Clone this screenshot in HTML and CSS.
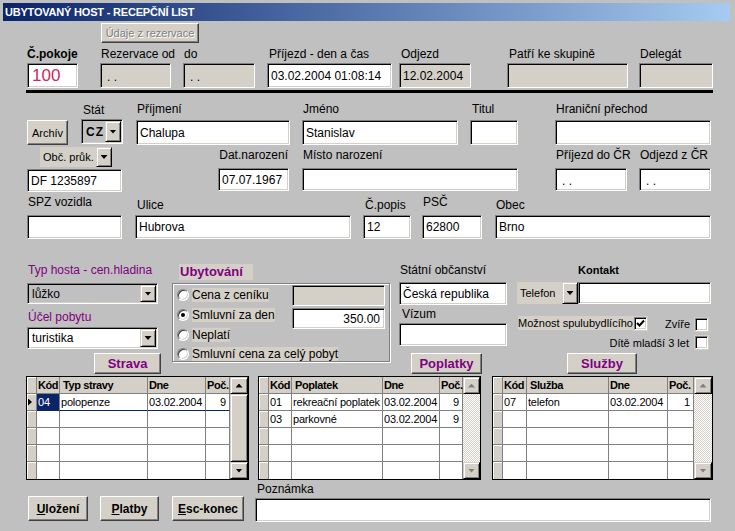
FILE: index.html
```html
<!DOCTYPE html>
<html lang="cs">
<head>
<meta charset="utf-8">
<title>Ubytovaný host - recepční list</title>
<link rel="stylesheet" href="styles.css">
</head>
<body>
<div class="win">
  <div class="titlebar">UBYTOVANÝ HOST - RECEPČNÍ LIST</div>
  <div class="form">
    <div class="row r0">
      <div class="btn btn-dis b-udaje">Údaje z rezervace</div>
    </div>

    <div class="row r1">
      <div class="fld f-pokoje"><div class="lbl lbl-b">Č.pokoje</div><div class="tb tb-room">100</div></div>
      <div class="fld f-rezod"><div class="lbl pl1">Rezervace od</div><div class="tb tb-dis tb-dots">. .</div></div>
      <div class="fld f-do"><div class="lbl pl1">do</div><div class="tb tb-dis tb-dots">. .</div></div>
      <div class="fld f-prijezd"><div class="lbl pl2">Příjezd - den a čas</div><div class="tb">03.02.2004 01:08:14</div></div>
      <div class="fld f-odjezd"><div class="lbl pl2">Odjezd</div><div class="tb tb-dis">12.02.2004</div></div>
      <div class="fld f-skup"><div class="lbl pl2">Patří ke skupině</div><div class="tb tb-dis"></div></div>
      <div class="fld f-deleg"><div class="lbl pl1">Delegát</div><div class="tb tb-dis"></div></div>
    </div>

    <div class="hline"></div>

    <div class="row r2">
      <div class="btn b-archiv">Archív</div>
      <div class="fld f-stat"><div class="lbl lbl-stat">Stát</div><div class="combo cb-cz"><span class="cb-txt">CZ</span><span class="dd"></span></div></div>
      <div class="fld f-prijmeni"><div class="lbl pl1">Příjmení</div><div class="tb">Chalupa</div></div>
      <div class="fld f-jmeno"><div class="lbl pl1">Jméno</div><div class="tb">Stanislav</div></div>
      <div class="fld f-titul"><div class="lbl pl2">Titul</div><div class="tb"></div></div>
      <div class="fld f-hranicni"><div class="lbl pl1">Hraniční přechod</div><div class="tb"></div></div>
    </div>

    <div class="row r3">
      <div class="fld f-obc">
        <div class="cmb-flat cf-obc"><span class="cf-txt">Obč. průk.</span><span class="dd"></span></div>
        <div class="tb tb-obc">DF 1235897</div>
      </div>
      <div class="fld f-datnar"><div class="lbl lbl-r">Dat.narození</div><div class="tb">07.07.1967</div></div>
      <div class="fld f-misto"><div class="lbl pl1">Místo narození</div><div class="tb"></div></div>
      <div class="fld f-prijcr"><div class="lbl pl1">Příjezd do ČR</div><div class="tb tb-dots">. .</div></div>
      <div class="fld f-odjcr"><div class="lbl pl1">Odjezd z ČR</div><div class="tb tb-dots">. .</div></div>
    </div>

    <div class="row r4">
      <div class="fld f-spz"><div class="lbl pl1">SPZ vozidla</div><div class="tb"></div></div>
      <div class="fld f-ulice"><div class="lbl pl2 lo">Ulice</div><div class="tb">Hubrova</div></div>
      <div class="fld f-popis"><div class="lbl pl2 lo">Č.popis</div><div class="tb">12</div></div>
      <div class="fld f-psc"><div class="lbl pl1">PSČ</div><div class="tb">62800</div></div>
      <div class="fld f-obec"><div class="lbl pl1 lo">Obec</div><div class="tb">Brno</div></div>
    </div>

    <div class="row r5">
      <div class="col c1">
        <div class="lbl lbl-p pl1">Typ hosta - cen.hladina</div>
        <div class="combo cb-luzko"><span class="cb-txt">lůžko</span><span class="dd"></span></div>
        <div class="lbl lbl-p lbl-ucel pl1">Účel pobytu</div>
        <div class="combo cb-tur"><span class="cb-txt">turistika</span><span class="dd"></span></div>
        <div class="btn btn-sec b-strava">Strava</div>
      </div>
      <div class="col c2">
        <div class="ubyt">Ubytování</div>
        <div class="frame">
          <div class="opt o1"><span class="radio"></span><span class="opt-l">Cena z ceníku</span></div>
          <div class="tb tb-dis fr-box"></div>
          <div class="opt"><span class="radio on"></span><span class="opt-l">Smluvní za den</span></div>
          <div class="tb fr-box num">350.00</div>
          <div class="opt span2"><span class="radio"></span><span class="opt-l">Neplatí</span></div>
          <div class="opt span2"><span class="radio"></span><span class="opt-l">Smluvní cena za celý pobyt</span></div>
        </div>
      </div>
      <div class="col c3">
        <div class="lbl pl1">Státní občanství</div>
        <div class="tb tb-obcan">Česká republika</div>
        <div class="lbl lbl-vizum">Vízum</div>
        <div class="tb tb-vizum"></div>
        <div class="btn btn-sec b-poplatky">Poplatky</div>
      </div>
      <div class="col c4">
        <div class="kontakt">Kontakt</div>
        <div class="tel-row">
          <span class="cf-txt cf-tel">Telefon</span><span class="dd"></span><div class="tb tb-tel"></div>
        </div>
        <div class="chk-row1">
          <span class="chk-lbl">Možnost spulubydlícího</span>
          <span class="chk chk-a"><svg width="9" height="9" viewBox="0 0 9 9"><polyline points="1,4 3.5,6.5 8,1.5" fill="none" stroke="#000" stroke-width="2"/></svg></span>
          <span class="chk-txt zvire">Zvíře</span>
          <span class="chk chk-b"></span>
        </div>
        <div class="chk-row2">
          <span class="chk-txt dite">Dítě mladší 3 let</span>
          <span class="chk"></span>
        </div>
        <div class="btn btn-sec b-sluzby">Služby</div>
      </div>
    </div>

    <div class="row r6">
      <div class="grid grid-strava">
        <div class="gt gt-strava">
          <div class="gh gs"></div><div class="gh">Kód</div><div class="gh gh3">Typ stravy</div><div class="gh">Dne</div><div class="gh">Poč.</div>
          <div class="gs cur"><span class="ptr"></span></div><div class="gc hl">04</div><div class="gc ul">polopenze</div><div class="gc ul">03.02.2004</div><div class="gc num ul">9</div>
          <div class="gs"></div><div class="gc"></div><div class="gc"></div><div class="gc"></div><div class="gc"></div>
          <div class="gs"></div><div class="gc"></div><div class="gc"></div><div class="gc"></div><div class="gc"></div>
          <div class="gs"></div><div class="gc"></div><div class="gc"></div><div class="gc"></div><div class="gc"></div>
          <div class="gs"></div><div class="gc"></div><div class="gc"></div><div class="gc"></div><div class="gc"></div>
        </div>
        <div class="sb sb-strava"><div class="sb-btn"><span class="tri-up"></span></div><div class="sb-thumb"></div><div class="sb-btn"><span class="tri-dn"></span></div></div>
      </div>

      <div class="grid grid-popl">
        <div class="gt gt-popl">
          <div class="gh gs"></div><div class="gh">Kód</div><div class="gh gh3">Poplatek</div><div class="gh">Dne</div><div class="gh">Poč.</div>
          <div class="gs"></div><div class="gc">01</div><div class="gc">rekreační poplatek</div><div class="gc">03.02.2004</div><div class="gc num">9</div>
          <div class="gs"></div><div class="gc">03</div><div class="gc">parkovné</div><div class="gc">03.02.2004</div><div class="gc num">9</div>
          <div class="gs"></div><div class="gc"></div><div class="gc"></div><div class="gc"></div><div class="gc"></div>
          <div class="gs"></div><div class="gc"></div><div class="gc"></div><div class="gc"></div><div class="gc"></div>
          <div class="gs"></div><div class="gc"></div><div class="gc"></div><div class="gc"></div><div class="gc"></div>
        </div>
        <div class="sb sb-dis sb-popl"><div class="sb-btn"><span class="tri-up"></span></div><div class="sb-track"></div><div class="sb-btn"><span class="tri-dn"></span></div></div>
      </div>

      <div class="grid grid-sluz">
        <div class="gt gt-sluz">
          <div class="gh gs"></div><div class="gh">Kód</div><div class="gh gh3">Služba</div><div class="gh">Dne</div><div class="gh">Poč.</div>
          <div class="gs"></div><div class="gc">07</div><div class="gc">telefon</div><div class="gc">03.02.2004</div><div class="gc num">1</div>
          <div class="gs"></div><div class="gc"></div><div class="gc"></div><div class="gc"></div><div class="gc"></div>
          <div class="gs"></div><div class="gc"></div><div class="gc"></div><div class="gc"></div><div class="gc"></div>
          <div class="gs"></div><div class="gc"></div><div class="gc"></div><div class="gc"></div><div class="gc"></div>
          <div class="gs"></div><div class="gc"></div><div class="gc"></div><div class="gc"></div><div class="gc"></div>
        </div>
        <div class="sb sb-dis sb-sluz"><div class="sb-btn"><span class="tri-up"></span></div><div class="sb-track"></div><div class="sb-btn"><span class="tri-dn"></span></div></div>
      </div>
    </div>

    <div class="row r7">
      <div class="btn btn-b b-ulozeni"><span><u>U</u>ložení</span></div>
      <div class="btn btn-b b-platby"><span><u>P</u>latby</span></div>
      <div class="btn btn-b b-esc"><span><u>E</u>sc-konec</span></div>
      <div class="fld f-pozn"><div class="lbl pl2">Poznámka</div><div class="tb"></div></div>
    </div>
  </div>
</div>
</body>
</html>
```

FILE: styles.css
```css
* { box-sizing: border-box; }
html, body { margin: 0; padding: 0; }
body {
  width: 735px; height: 531px; overflow: hidden;
  background: #c0c0c0;
  font-family: "Liberation Sans", Arial, sans-serif;
  font-size: 12px; line-height: 14px; color: #000;
}
.win { width: 735px; height: 531px; padding: 3px 5px 0 3px; }
.titlebar {
  height: 18px; padding: 1px 0 0 2px;
  background: linear-gradient(to right, #0a246a, #a6caf0);
  color: #fff; font-weight: bold; font-size: 11px; letter-spacing: -0.2px;
  line-height: 17px; white-space: nowrap;
}
.row { display: flex; align-items: flex-start; }
.fld { display: flex; flex-direction: column; flex: none; }
.col { display: flex; flex-direction: column; flex: none; align-items: flex-start; }
.lbl { white-space: nowrap; }
.lbl-b { font-weight: bold; }
.lbl-r { text-align: right; padding-right: 1px; }
.lbl-p { color: #800080; }
.pl1 { padding-left: 1px; }
.pl2 { padding-left: 2px; }

/* text boxes */
.tb {
  background: #fff; border: 1px solid; border-color: #808080 #fff #fff #808080;
  box-shadow: inset 1px 1px 0 #000, inset -1px -1px 0 #d4d0c8;
  padding: 0 3px; display: flex; align-items: center; white-space: nowrap; overflow: hidden;
  width: 100%;
}
.tb-dis { background: #d4d0c8; }
.tb-dots { padding-left: 6px; padding-top: 3px; }
.tb-room { color: #cc2a5e; font-size: 17px; padding-left: 4px; }
.num { justify-content: flex-end; padding-right: 4px; }

/* buttons */
.btn {
  background: #d4d0c8; border: 1px solid; border-color: #fff #404040 #404040 #fff;
  box-shadow: inset -1px -1px 0 #808080;
  display: flex; align-items: center; justify-content: center; white-space: nowrap; flex: none;
}
.btn-dis { color: #808080; text-shadow: 1px 1px 0 #fff; font-size: 11px; }
.btn-sec { color: #800080; font-weight: bold; font-size: 13px; }
.btn-b { font-weight: bold; font-size: 12px; }
.btn-b u { text-decoration: underline; text-underline-offset: 1px; }

/* drop-down */
.dd {
  width: 16px; flex: none; background: #d4d0c8;
  border: 1px solid; border-color: #d4d0c8 #000 #000 #d4d0c8;
  box-shadow: inset 1px 1px 0 #fff, inset -1px -1px 0 #808080;
  display: flex; align-items: center; justify-content: center;
}
.dd::after {
  content: ""; width: 7px; height: 4px; background: #000;
  clip-path: polygon(0 0, 100% 0, 50% 100%);
}
.combo {
  display: flex; border: 1px solid; border-color: #808080 #fff #fff #808080;
  box-shadow: inset 1px 1px 0 #000, inset -1px -1px 0 #d4d0c8;
  padding: 1px; background: #c0c0c0;
}
.cb-txt { flex: 1; padding-left: 3px; display: flex; align-items: center; white-space: nowrap; }
.cmb-flat { display: flex; }
.cf-txt { background: #d4d0c8; font-size: 11px; display: flex; align-items: center; padding-left: 3px; white-space: nowrap; }

/* row 0 */
.r0 { margin-top: 2px; }
.b-udaje { margin-left: 98px; width: 98px; height: 20px; }

/* row 1 */
.r1 { margin-top: 4px; }
.r1 .lbl { height: 16px; }
.r1 .tb { height: 25px; }
.f-pokoje { margin-left: 24px; width: 51px; }
.f-rezod { margin-left: 22px; width: 71px; }
.f-do { margin-left: 12px; width: 72px; }
.f-prijezd { margin-left: 12px; width: 125px; }
.f-odjezd { margin-left: 7px; width: 72px; }
.f-skup { margin-left: 36px; width: 121px; }
.f-deleg { margin-left: 11px; width: 74px; }

.hline { margin: 2px 0 0 23px; width: 687px; height: 3px; background: #000; }

/* row 2 */
.r2 { margin-top: 8px; align-items: flex-end; }
.r2 .lbl { height: 18px; }
.r2 .tb { height: 25px; }
.b-archiv { margin-left: 24px; width: 41px; height: 25px; font-size: 11px; }
.f-stat { margin-left: 13px; width: 42px; }
.lbl-stat { padding: 2px 0 0 2px; }
.cb-cz { height: 25px; margin-bottom: 1px; font-weight: bold; letter-spacing: 1px; }
.cb-cz .cb-txt { padding-left: 3px; }
.f-prijmeni { margin-left: 13px; width: 154px; }
.f-jmeno { margin-left: 12px; width: 156px; }
.f-titul { margin-left: 12px; width: 48px; }
.f-hranicni { margin-left: 37px; width: 156px; }

/* row 3 */
.r3 { margin-top: 2px; }
.r3 .lbl { height: 21px; padding-top: 1px; }
.r3 .tb { height: 23px; }
.f-obc { margin-left: 24px; width: 95px; }
.cf-obc { margin-left: 13px; width: 72px; height: 20px; }
.cf-obc .cf-txt { flex: 1; }
.r3 .tb-obc { margin-top: 2px; }
.f-datnar { margin-left: 96px; width: 71px; }
.f-misto { margin-left: 13px; width: 216px; }
.f-prijcr { margin-left: 37px; width: 72px; }
.f-odjcr { margin-left: 12px; width: 72px; }

/* row 4 */
.r4 { margin-top: 3px; }
.r4 .lbl { height: 20px; }
.r4 .lbl.lo { padding-top: 3px; }
.r4 .tb { height: 24px; }
.f-spz { margin-left: 24px; width: 95px; }
.f-ulice { margin-left: 13px; width: 216px; }
.f-popis { margin-left: 12px; width: 48px; }
.f-psc { margin-left: 11px; width: 60px; }
.f-obec { margin-left: 13px; width: 216px; }

/* section 2 */
.r5 { margin-top: 24px; }
.c1 { margin-left: 24px; width: 134px; }
.c1 .lbl { height: 14px; }
.cb-luzko { margin-top: 6px; width: 131px; height: 21px; }
.lbl-ucel { margin-top: 6px; }
.cb-tur { margin-top: 3px; width: 131px; height: 22px; background: #fff; }
.b-strava { margin: 4px 0 0 67px; width: 67px; height: 21px; }

.c2 { margin-left: 11px; width: 218px; }
.ubyt {
  margin: 1px 0 0 7px; width: 74px; height: 16px; line-height: 16px; padding-left: 1px;
  background: #d4d0c8; color: #800080; font-weight: bold; font-size: 13px;
}
.frame {
  margin-top: 3px; width: 218px; height: 79px;
  border: 1px solid #808080; box-shadow: inset 1px 1px 0 #fff, 1px 1px 0 #fff;
  padding: 1px 0 0 4px;
  display: grid; grid-template-columns: 115px 93px; grid-template-rows: 23px 20px 19px 15px;
  align-items: start;
}
.opt { display: flex; align-items: flex-start; white-space: nowrap; }
.opt.o1 { margin-top: 3px; }
.span2 { grid-column: 1 / 3; }
.opt-l { background: #d4d0c8; height: 14px; line-height: 14px; margin-left: 3px; }
.radio {
  width: 12px; height: 12px; margin-top: 1px; border-radius: 50%; background: #fff; flex: none;
  border: 1px solid; border-color: #808080 #fff #fff #808080;
  box-shadow: inset 1px 1px 0 #404040, inset -1px -1px 0 #d4d0c8;
  position: relative;
}
.radio.on::after {
  content: ""; position: absolute; left: 3px; top: 3px; width: 4px; height: 4px;
  border-radius: 50%; background: #000;
}
.fr-box { height: 21px; width: 93px; }

.c3 { margin-left: 9px; width: 108px; }
.c3 .lbl { height: 14px; }
.tb-obcan { margin-top: 5px; height: 23px; }
.lbl-vizum { margin-top: 2px; padding-left: 3px; }
.tb-vizum { margin-top: 2px; height: 23px; }
.b-poplatky { margin: 7px 0 0 12px; width: 71px; height: 21px; }

.c4 { margin-left: 10px; width: 194px; font-size: 11px; }
.kontakt { margin-left: 61px; height: 14px; font-weight: bold; font-size: 11px; }
.tel-row { display: flex; margin-top: 5px; height: 22px; width: 194px; }
.cf-tel { width: 45px; }
.tb-tel { width: 133px; height: 22px; }
.chk-row1 { display: flex; align-items: flex-start; margin-top: 12px; height: 15px; }
.chk-lbl { margin-left: 1px; width: 115px; height: 14px; line-height: 14px; background: #d4d0c8; white-space: nowrap; }
.chk {
  width: 13px; height: 13px; flex: none; background: #fff;
  border: 1px solid; border-color: #808080 #fff #fff #808080;
  box-shadow: inset 1px 1px 0 #000, inset -1px -1px 0 #d4d0c8, 0 0 0 1px #d4d0c8;
  display: flex; align-items: center; justify-content: center;
}
.chk-a { margin: 1px 0 0 1px; }
.chk-txt { white-space: nowrap; }
.zvire { width: 45px; text-align: right; padding-right: 2px; margin-top: 1px; }
.chk-b { margin: 2px 0 0 3px; }
.chk-row2 { display: flex; justify-content: flex-end; margin-top: 5px; padding-right: 3px; height: 13px; width: 194px; }
.dite { margin-right: 6px; }
.b-sluzby { margin: 4px 0 0 50px; width: 70px; height: 21px; }

/* grids */
.r6 { margin-top: 2px; }
.grid { display: flex; border: 1px solid #000; height: 104px; flex: none; background: #fff; }
.grid-strava { margin-left: 23px; width: 223px; }
.grid-popl { margin-left: 9px; width: 223px; }
.grid-sluz { margin-left: 11px; width: 221px; }
.gt { display: grid; grid-template-rows: repeat(6, 17px); font-size: 11px; line-height: 16px; letter-spacing: -0.2px; }
.gt-strava { grid-template-columns: 10px 23px 88px 58px 24px; }
.gt-popl { grid-template-columns: 10px 23px 91px 57px 23px; }
.gt-sluz { grid-template-columns: 10px 24px 82px 59px 26px; }
.gt > div {
  border-right: 1px solid #808080; border-bottom: 1px solid #808080;
  padding-left: 1px; white-space: nowrap; overflow: hidden;
}
.gt > div:nth-last-child(-n+5) { border-bottom: none; }
.gt > .gh { background: #d4d0c8; font-weight: bold; padding-left: 1px; letter-spacing: -0.4px; overflow: visible; }
.gt > .gh3 { padding-left: 3px; }
.gt > .gs { background: #d4d0c8; box-shadow: inset 1px 1px 0 #fff; padding: 0; display: flex; align-items: center; }
.gc { background: #fff; }
.gt > .num { text-align: right; padding-right: 3px; }
.gt > .hl { background: #0a246a; color: #fff; border-bottom-color: #0a246a; }
.gt > .ul { border-bottom-color: #0a246a; }
.ptr {
  margin-left: 1px; width: 4px; height: 7px; background: #000;
  clip-path: polygon(0 0, 100% 50%, 0 100%);
}

.sb { display: flex; flex-direction: column; background: #d4d0c8; }
.sb-strava, .sb-sluz { width: 18px; }
.sb-popl { width: 17px; }
.sb-btn {
  height: 17px; flex: none; background: #d4d0c8;
  border: 1px solid; border-color: #d4d0c8 #000 #000 #d4d0c8;
  box-shadow: inset 1px 1px 0 #fff, inset -1px -1px 0 #808080;
  display: flex; align-items: center; justify-content: center;
}
.sb-thumb {
  flex: 1; background: #d4d0c8;
  border: 1px solid; border-color: #d4d0c8 #000 #000 #d4d0c8;
  box-shadow: inset 1px 1px 0 #fff, inset -1px -1px 0 #808080;
}
.sb-track {
  flex: 1;
  background: repeating-conic-gradient(#fff 0 25%, #d4d0c8 0 50%) 0 0 / 2px 2px;
}
.tri-up, .tri-dn { width: 7px; height: 4px; background: #000; }
.tri-up { clip-path: polygon(50% 0, 100% 100%, 0 100%); }
.tri-dn { clip-path: polygon(0 0, 100% 0, 50% 100%); }
.sb-dis .tri-up, .sb-dis .tri-dn { background: #808080; }

/* bottom */
.r7 { margin-top: 1px; align-items: flex-end; }
.b-ulozeni { margin: 0 0 1px 25px; width: 60px; height: 25px; }
.b-platby { margin: 0 0 1px 12px; width: 59px; height: 25px; }
.b-esc { margin: 0 0 1px 13px; width: 72px; height: 25px; }
.f-pozn { margin-left: 11px; width: 456px; }
.f-pozn .lbl { height: 17px; padding-top: 1px; }
.f-pozn .tb { height: 24px; }
```
